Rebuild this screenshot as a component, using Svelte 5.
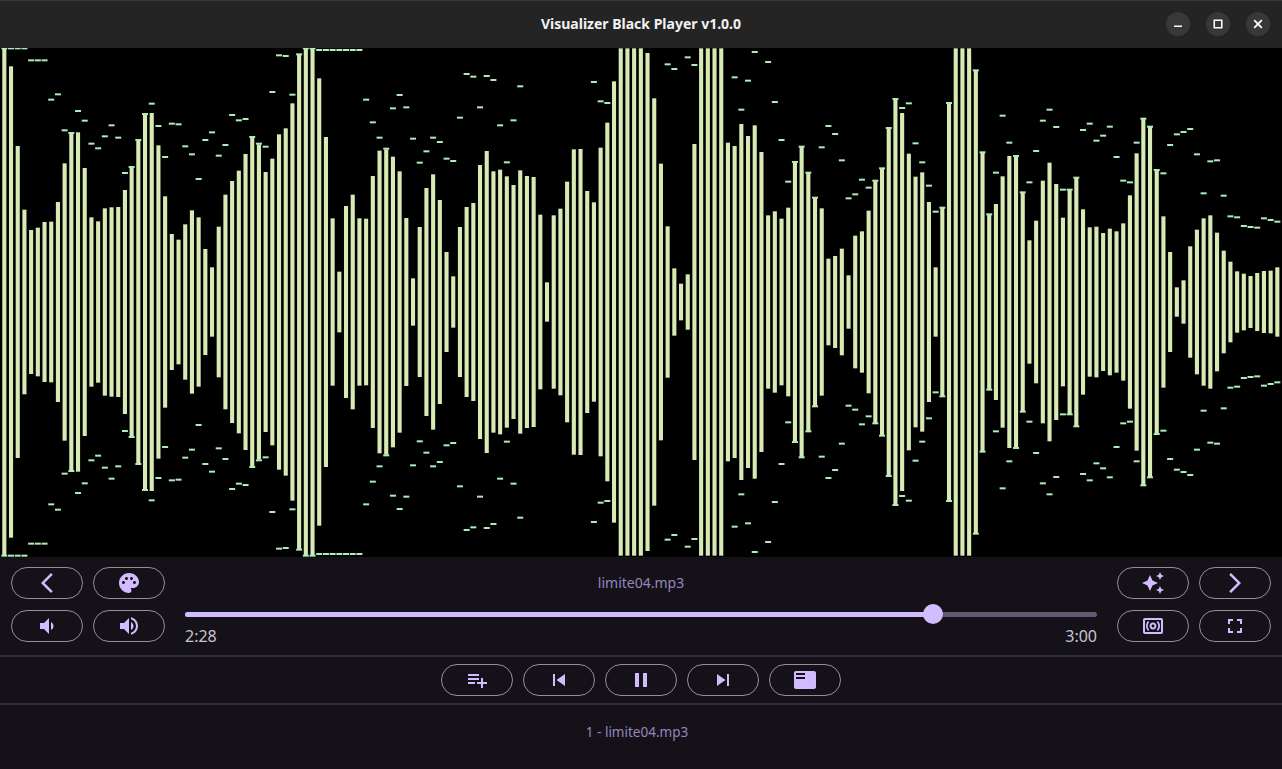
<script>
  // bar tops and peak marks measured in the top half, in 1/3 px above the centre line
  const tops = [8,61,300,491,552,545,528,527,468,352,262,259,366,514,526,487,484,483,432,364,283,205,201,298,451,564,581,535,493,514,609,664,
    542,446,405,374,324,275,295,378,338,265,247,172,26,8,8,97,273,517,677,480,446,517,518,390,314,310,332,376,516,697,543,426,
    385,462,618,691,543,483,471,357,315,376,371,391,417,373,390,393,506,709,508,488,407,310,309,435,469,305,230,106,7,7,7,7,
    21,157,353,541,667,713,685,294,7,7,7,7,290,300,234,270,238,318,508,496,518,485,349,303,381,456,487,638,630,608,688,569,
    556,494,405,368,247,160,201,323,392,379,468,664,486,172,7,7,7,74,320,506,474,391,330,331,440,583,524,404,350,414,515,432,
    396,490,544,542,561,548,556,532,448,322,219,243,373,511,618,724,703,601,551,517,508,560,614,647,676,683,690,681,675,674,664];
  const peaks = [7,7,7,7,43,43,43,161,145,253,261,195,224,293,307,271,238,275,381,363,282,204,173,240,333,233,235,301,325,399,282,259,
    329,297,207,223,219,273,293,302,138,28,30,146,25,7,7,12,12,12,12,12,12,12,161,229,275,308,187,147,184,278,350,316,
    275,288,338,345,215,84,92,184,90,102,238,349,223,121,0,0,0,0,0,0,0,0,0,0,108,166,171,0,0,0,0,0,
    0,0,0,55,69,0,34,57,0,0,0,0,0,94,191,104,18,0,48,168,282,407,348,302,380,455,304,240,264,343,457,445,
    401,425,404,367,246,159,186,172,292,349,419,497,485,171,0,0,0,73,319,505,380,209,290,330,439,409,315,224,191,243,431,431,
    395,252,233,284,269,242,333,404,409,290,218,242,372,382,297,265,258,249,325,442,346,343,449,511,514,540,543,545,517,522,527];

  const mid = 254;
  const halfHeight = (v) => (768 - v) / 3;
  const barX = (i) => 4.33 + i * 6.7;

  const icons = {
    back: "M17.77 3.77 16 2 6 12l10 10 1.77-1.77L9.54 12z",
    forward: "M6.23 20.23 8 22l10-10L8 2 6.23 3.77 14.46 12z",
    palette: "M12 2C6.49 2 2 6.49 2 12s4.49 10 10 10c1.38 0 2.5-1.12 2.5-2.5 0-.61-.23-1.2-.64-1.67-.08-.1-.13-.21-.13-.33 0-.28.22-.5.5-.5H16c3.31 0 6-2.69 6-6 0-4.96-4.49-9-10-9zm5.5 11c-.83 0-1.5-.67-1.5-1.5s.67-1.5 1.5-1.5 1.5.67 1.5 1.5-.67 1.5-1.5 1.5zm-3-4c-.83 0-1.5-.67-1.5-1.5S13.67 6 14.5 6s1.5.67 1.5 1.5S15.33 9 14.5 9zM5 11.5c0-.83.67-1.5 1.5-1.5s1.5.67 1.5 1.5S7.33 13 6.5 13 5 12.33 5 11.5zm6-4c0 .83-.67 1.5-1.5 1.5S8 8.33 8 7.5 8.67 6 9.5 6s1.5.67 1.5 1.5z",
    volDown: "M18.5 12c0-1.77-1.02-3.29-2.5-4.03v8.05c1.48-.73 2.5-2.25 2.5-4.02zM5 9v6h4l5 5V4L9 9H5z",
    volUp: "M3 9v6h4l5 5V4L7 9H3zm13.5 3c0-1.77-1.02-3.29-2.5-4.03v8.05c1.48-.73 2.5-2.25 2.5-4.02zM14 3.23v2.06c2.89.86 5 3.54 5 6.71s-2.11 5.85-5 6.71v2.06c4.01-.91 7-4.49 7-8.77s-2.99-7.86-7-8.77z",
    sparkle: "M19 9l1.25-2.75L23 5l-2.75-1.25L19 1l-1.25 2.75L15 5l2.75 1.25L19 9zm-7.5.5L9 4 6.5 9.5 1 12l5.5 2.5L9 20l2.5-5.5L17 12l-5.5-2.5zM19 15l-1.25 2.75L15 19l2.75 1.25L19 23l1.25-2.75L23 19l-2.75-1.25L19 15z",
    surround: "M20 4H4c-1.1 0-2 .9-2 2v12c0 1.1.9 2 2 2h16c1.1 0 2-.9 2-2V6c0-1.1-.9-2-2-2zm0 14H4V6h16v12zM8.29 15.71C7.27 14.69 6.75 13.35 6.75 12s.52-2.69 1.53-3.72L7.05 7.05C5.68 8.41 5 10.21 5 12s.68 3.59 2.06 4.94l1.23-1.23zM12 15.5c1.93 0 3.5-1.57 3.5-3.5S13.93 8.5 12 8.5 8.5 10.07 8.5 12s1.57 3.5 3.5 3.5zm0-5c.83 0 1.5.67 1.5 1.5s-.67 1.5-1.5 1.5-1.5-.67-1.5-1.5.67-1.5 1.5-1.5zm3.72 5.22c1.02-1.03 1.53-2.37 1.53-3.72s-.52-2.69-1.54-3.71l1.23-1.23C18.32 8.41 19 10.21 19 12s-.68 3.59-2.06 4.94l-1.22-1.22z",
    fullscreen: "M7 14H5v5h5v-2H7v-3zm-2-4h2V7h3V5H5v5zm12 7h-3v2h5v-5h-2v3zM14 5v2h3v3h2V5h-5z",
    queue: "M14 10H3v2h11v-2zm0-4H3v2h11V6zm4 8v-4h-2v4h-4v2h4v4h2v-4h4v-2h-4zM3 16h7v-2H3v2z",
    prev: "M6 6h2v12H6zm3.5 6l8.5 6V6z",
    pause: "M6 19h4V5H6v14zm8-14v14h4V5h-4z",
    next: "M6 18l8.5-6L6 6v12zM16 6v12h2V6h-2z",
    list: "M21 3H3c-1.1 0-2 .9-2 2v14c0 1.1.9 2 2 2h18c1.1 0 2-.9 2-2V5c0-1.1-.9-2-2-2zm-9 8H3V9h9v2zm0-4H3V5h9v2z"
  };
</script>

{#snippet pill(name)}
  <button class="pill" type="button">
    <svg viewBox="0 0 24 24" width="24" height="24"><path d={icons[name]} /></svg>
  </button>
{/snippet}

<div class="window">
  <header class="titlebar">
    <span class="title">Visualizer Black Player v1.0.0</span>
    <div class="win-buttons">
      <button class="win" type="button" aria-label="Minimize">
        <svg viewBox="0 0 24 24" width="24" height="24"><path d="M8 14.25h8" /></svg>
      </button>
      <button class="win" type="button" aria-label="Maximize">
        <svg viewBox="0 0 24 24" width="24" height="24"><rect x="8.25" y="8.25" width="7.5" height="7.5" /></svg>
      </button>
      <button class="win close" type="button" aria-label="Close">
        <svg viewBox="0 0 24 24" width="24" height="24"><path d="M8.2 8.2l7.6 7.6M15.8 8.2l-7.6 7.6" /></svg>
      </button>
    </div>
  </header>

  <div class="visual">
    <svg viewBox="0 0 1282 509" width="1282" height="509">
      {#each tops as t, i}
        <rect class="bar" x={barX(i) - 2.05} y={mid - halfHeight(t)} width="4.1" height={halfHeight(t) * 2} />
      {/each}
      {#each peaks as p, i}
        {#if p}
          <rect class="peak" x={barX(i) - 3} y={mid - halfHeight(p) - 1} width="6" height="2" />
          <rect class="peak" x={barX(i) - 3} y={mid + halfHeight(p) - 1} width="6" height="2" />
        {/if}
      {/each}
    </svg>
  </div>

  <section class="controls">
    <div class="pill-grid">
      {@render pill("back")}
      {@render pill("palette")}
      {@render pill("volDown")}
      {@render pill("volUp")}
    </div>
    <div class="progress">
      <div class="track-name">limite04.mp3</div>
      <div class="slider">
        <div class="slider-fill" style="width: 748px"></div>
        <div class="slider-thumb"></div>
      </div>
      <div class="times"><span>2:28</span><span>3:00</span></div>
    </div>
    <div class="pill-grid">
      {@render pill("sparkle")}
      {@render pill("forward")}
      {@render pill("surround")}
      {@render pill("fullscreen")}
    </div>
  </section>

  <section class="transport">
    {@render pill("queue")}
    {@render pill("prev")}
    {@render pill("pause")}
    {@render pill("next")}
    {@render pill("list")}
  </section>

  <footer class="playlist">1 - limite04.mp3</footer>
</div>

<style>
  :global(body) {
    margin: 0;
    background: #141218;
  }
  .window {
    display: flex;
    flex-direction: column;
    height: 769px;
    width: 1282px;
    overflow: hidden;
    background: #141218;
    font-family: "Noto Sans", sans-serif;
  }

  .titlebar {
    position: relative;
    display: flex;
    align-items: center;
    justify-content: flex-end;
    box-sizing: border-box;
    height: 48px;
    padding: 0 12px 1px;
    flex: none;
    background: #242424;
    border-top: 1px solid #3a3937;
  }
  .title {
    position: absolute;
    left: 0;
    right: 0;
    top: 13px;
    line-height: 20px;
    text-align: center;
    color: #f2f2f2;
    font-size: 14px;
    font-weight: 700;
  }
  .win-buttons {
    display: flex;
    gap: 16px;
  }
  .win {
    width: 24px;
    height: 24px;
    padding: 0;
    border: none;
    border-radius: 50%;
    background: #383838;
    display: block;
  }
  .win svg {
    display: block;
    fill: none;
    stroke: #fff;
    stroke-width: 1.5;
  }
  .win.close svg {
    stroke-width: 1.8;
  }

  .visual {
    height: 509px;
    flex: none;
    background: #000;
  }
  .visual svg {
    display: block;
  }
  .bar {
    fill: #d8eab4;
  }
  .peak {
    fill: #aeecb8;
  }

  .controls {
    display: flex;
    gap: 20px;
    box-sizing: border-box;
    height: 100px;
    padding: 10px 11px 0;
    flex: none;
    border-bottom: 2px solid #2f2d34;
  }
  .pill-grid {
    display: grid;
    grid-template-columns: 72px 72px;
    grid-auto-rows: 32px;
    column-gap: 10px;
    row-gap: 11px;
    flex: none;
  }
  .pill {
    box-sizing: border-box;
    width: 72px;
    height: 32px;
    padding: 0;
    display: flex;
    align-items: center;
    justify-content: center;
    background: transparent;
    border: 1px solid #938f99;
    border-radius: 16px;
  }
  .pill svg {
    display: block;
    fill: #d0bcff;
  }

  .progress {
    flex: 1;
    min-width: 0;
    display: flex;
    flex-direction: column;
  }
  .track-name {
    height: 32px;
    line-height: 32px;
    text-align: center;
    font-size: 14px;
    color: #9685bd;
  }
  .slider {
    position: relative;
    height: 5px;
    margin-top: 13px;
    border-radius: 3px;
    background: #625a72;
  }
  .slider-fill {
    height: 100%;
    border-radius: 3px;
    background: #d0bcff;
  }
  .slider-thumb {
    position: absolute;
    left: 738px;
    top: -8px;
    width: 20px;
    height: 20px;
    border-radius: 50%;
    background: #d0bcff;
  }
  .times {
    display: flex;
    justify-content: space-between;
    margin-top: 9px;
    font-size: 16px;
    line-height: 20px;
    color: #cac4d0;
  }

  .transport {
    display: flex;
    justify-content: center;
    align-items: center;
    gap: 10px;
    box-sizing: border-box;
    height: 48px;
    flex: none;
    border-bottom: 2px solid #2f2d34;
  }

  .playlist {
    flex: 1;
    display: flex;
    align-items: center;
    justify-content: center;
    padding: 0 8px 10px 0;
    font-size: 13.5px;
    color: #9685bd;
  }
</style>
